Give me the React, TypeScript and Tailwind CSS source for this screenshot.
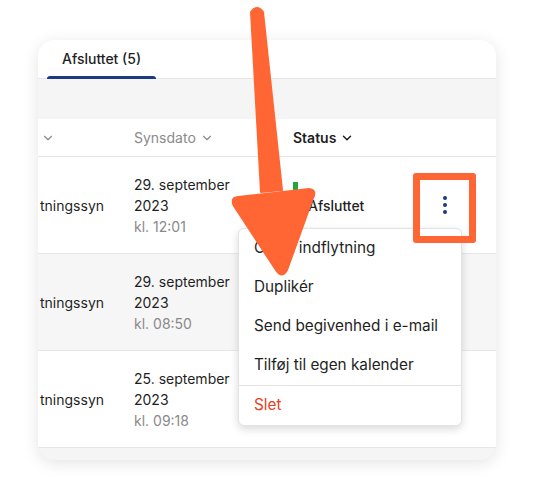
import { ChevronDown } from 'lucide-react'

const rows = [
  { date: '29. september', year: '2023', time: 'kl. 12:01', status: true, gray: false },
  { date: '29. september', year: '2023', time: 'kl. 08:50', status: false, gray: true },
  { date: '25. september', year: '2023', time: 'kl. 09:18', status: false, gray: false },
]

const menu = ['Opret indflytning', 'Duplikér', 'Send begivenhed i e-mail', 'Tilføj til egen kalender']

export default function App() {
  return (
    <div className="relative w-[535px] h-[499px] bg-white overflow-hidden text-[14px] text-[#1f1f1f]"
      style={{ fontFamily: 'Inter, "Liberation Sans", sans-serif' }}>
      <div className="absolute left-[38px] top-[40px] w-[458px] h-[420px] bg-[#f5f5f5] rounded-2xl shadow-[0_3px_16px_rgba(0,0,0,0.11)] overflow-hidden">
        {/* tabs */}
        <div className="h-[39px] bg-white border-b border-[#e6e6e6] flex pl-[9px]">
          <div className="relative px-[15px] pt-[8px] font-medium">
            Afsluttet (5)
            <span className="absolute left-0 right-0 bottom-[-1px] h-[3px] rounded-t bg-[#1b3a80]" />
          </div>
        </div>
        <div className="h-[40px] bg-[#f5f5f5]" />

        {/* header */}
        <div className="h-[38px] bg-white border-b border-[#e6e6e6] flex items-center">
          <div className="w-[96px] pl-[3px]"><ChevronDown size={14} className="text-[#8a8a8a]" /></div>
          <div className="w-[159px] flex items-center gap-1 text-[#8a8a8a]">Synsdato <ChevronDown size={14} /></div>
          <div className="flex items-center gap-1 font-semibold">Status <ChevronDown size={14} strokeWidth={2.5} /></div>
        </div>

        {rows.map((r, i) => (
          <div key={i} className={`h-[97px] border-b border-[#e6e6e6] flex items-center ${r.gray ? 'bg-[#f6f6f6]' : 'bg-white'}`}>
            <div className="w-[96px] pl-[2px]">tningssyn</div>
            <div className="w-[159px] leading-[21px] pt-[1px]">
              <div>{r.date}</div>
              <div>{r.year}</div>
              <div className="text-[#8a8a8a]">{r.time}</div>
            </div>
            {r.status && (
              <div className="flex items-center gap-[10px] w-[150px] font-medium">
                <span className="w-[5px] h-[46px] bg-[#22a63a]" />
                Afsluttet
              </div>
            )}
            {r.status && (
              <div className="flex flex-col gap-[3px] items-center">
                <span className="w-[4px] h-[4px] rounded-full bg-[#1b3a80]" />
                <span className="w-[4px] h-[4px] rounded-full bg-[#1b3a80]" />
                <span className="w-[4px] h-[4px] rounded-full bg-[#1b3a80]" />
              </div>
            )}
          </div>
        ))}
      </div>

      {/* dropdown menu */}
      <div className="absolute left-[238px] top-[228px] w-[224px] bg-white border border-[#e3e3e3] rounded-md shadow-[0_3px_8px_rgba(0,0,0,0.15)]">
        {menu.map(m => (
          <div key={m} className="h-[39px] flex items-center px-[15px] text-[15.3px]">{m}</div>
        ))}
        <div className="border-t border-[#e3e3e3] h-[40px] flex items-center px-[15px] text-[15.3px] text-[#e8401c]">Slet</div>
      </div>

      {/* annotations */}
      <div className="absolute left-[413px] top-[173px] w-[63px] h-[70px] border-[7px] border-[#ff6633] rounded-[3px]" />
      <svg className="absolute left-0 top-0" width="535" height="499" viewBox="0 0 535 499">
        <path d="M251 12 Q257 4 263 12 L282 190 L261 192 Z" fill="#ff6633" stroke="#ff6633" strokeWidth="2" strokeLinejoin="round" />
        <path d="M238 197 L309 189 Q317 190 313 198 L287 270 Q282 279 276 270 L234 206 Q230 198 238 197 Z" fill="#ff6633" stroke="#ff6633" strokeWidth="2" strokeLinejoin="round" />
      </svg>
    </div>
  )
}
